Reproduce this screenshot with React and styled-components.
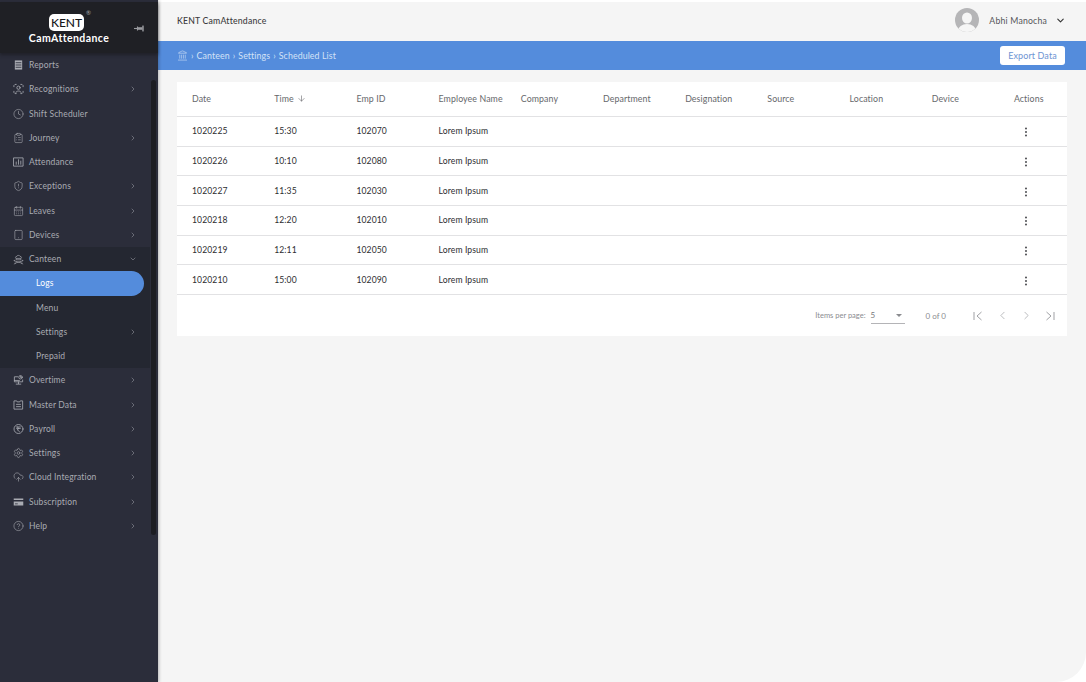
import React from "react";
import styled, { createGlobalStyle } from "styled-components";
import {
  Clock,
  ClipboardList,
  ShieldAlert,
  CalendarDays,
  Tablet,
  ChevronRight,
  ChevronDown,
  ChevronLeft,
  Settings,
  CloudUpload,
  CircleHelp,
  Landmark,
  ArrowDown,
  EllipsisVertical,
} from "lucide-react";

const GlobalStyle = createGlobalStyle`
  html, body { margin: 0; padding: 0; background: #fff; }
  body { font-family: "Lato", "Open Sans", sans-serif; }
  * { box-sizing: border-box; }
`;

const Page = styled.div`
  width: 1086px;
  height: 682px;
  display: flex;
  overflow: hidden;
`;
const Sidebar = styled.aside`
  width: 158px;
  flex: none;
  background: #2b2d3a;
  position: relative;
  box-shadow: 1px 0 3px rgba(0, 0, 0, 0.25);
`;
const Brand = styled.div`
  height: 51px;
  margin-top: 2px;
  background: #1f2025;
  box-shadow: 0 2px 3px rgba(20, 20, 24, 0.5);
  display: flex;
  flex-direction: column;
  align-items: center;
  padding-top: 12px;
  padding-right: 20px;
  position: relative;
`;
const LogoBadge = styled.div`
  width: 35px;
  height: 17px;
  margin-right: 5px;
  background: #fff;
  color: #17171a;
  font-size: 12px;
  font-weight: 500;
  line-height: 17px;
  text-align: center;
  border-radius: 5px;
  position: relative;
  &::after {
    content: "®";
    position: absolute;
    top: -5px;
    right: -7px;
    font-size: 6px;
    line-height: 8px;
    font-weight: 400;
    color: #aaa;
  }
`;
const LogoName = styled.div`
  color: #fff;
  font-size: 10.5px;
  font-weight: 700;
  line-height: 13px;
  margin-top: 1px;
  letter-spacing: 0.4px;
`;
const PinButton = styled.span`
  position: absolute;
  top: 21px;
  left: 134px;
  display: flex;
  color: #9a9ba0;
`;
const ScrollThumb = styled.div`
  position: absolute;
  top: 80px;
  left: 151px;
  width: 5px;
  height: 455px;
  border-radius: 3px;
  background: #1c1d22;
`;
const Menu = styled.nav`
  display: flex;
  flex-direction: column;
`;
const Group = styled.div`
  display: flex;
  flex-direction: column;
  background: #242731;
  margin-right: 8px;
`;
const Item = styled.div`
  height: 24.25px;
  display: flex;
  align-items: center;
  padding-left: ${(p) => (p.$sub ? "36px" : "13px")};
  padding-right: 13px;
  margin-right: ${(p) => (p.$sub || p.$flush ? "0" : "8px")};
  color: #a9abb2;
  font-size: 8.5px;
  letter-spacing: 0.15px;
  gap: 5px;
`;
const ActiveItem = styled(Item)`
  background: #548cdc;
  color: #fff;
  border-radius: 0 13px 13px 0;
  margin-right: 6px;
`;
const ItemIcon = styled.span`
  width: 11px;
  display: flex;
  justify-content: center;
  flex: none;
  color: #a9abb2;
`;
const ItemLabel = styled.span`
  flex: 1;
  white-space: nowrap;
`;
const Main = styled.main`
  flex: 1;
  min-width: 0;
  margin-top: 2px;
  height: 680px;
  background: #f5f5f5;
  border-bottom-right-radius: 30px;
  display: flex;
  flex-direction: column;
`;
const TopBar = styled.header`
  height: 39px;
  display: flex;
  align-items: center;
  padding: 0 20px 3px 19px;
  color: #3c3c40;
  font-size: 8.7px;
  letter-spacing: 0.2px;
`;
const AppTitle = styled.div`
  flex: 1;
  font-weight: 500;
`;
const Avatar = styled.svg`
  width: 24px;
  height: 24px;
  margin-right: 10px;
`;
const UserName = styled.span`
  margin-right: 8px;
  color: #55555a;
`;
const BlueBar = styled.div`
  height: 29px;
  background: #548cdc;
  display: flex;
  align-items: center;
  justify-content: space-between;
  padding: 0 21px 0 19px;
`;
const Crumbs = styled.div`
  display: flex;
  align-items: center;
  gap: 3px;
  color: #d3e2f7;
  font-size: 8.8px;
  letter-spacing: 0.1px;
`;
const ExportButton = styled.button`
  width: 65px;
  height: 19px;
  background: #fff;
  border: none;
  border-radius: 3px;
  color: #6d94d3;
  font: inherit;
  font-size: 9px;
  letter-spacing: 0.1px;
  padding: 0;
`;
const Card = styled.section`
  margin: 12px 19px 0 19px;
  background: #fff;
  display: flex;
  flex-direction: column;
`;
const Row = styled.div`
  display: grid;
  grid-template-columns: repeat(10, 82.2px) minmax(0, 1fr);
  height: ${(p) => (p.$head ? "35px" : "29.7px")};
  padding-left: 15px;
  padding-bottom: ${(p) => (p.$head ? "2px" : "0")};
  align-items: center;
  border-bottom: 1px solid #e2e2e4;
  font-size: ${(p) => (p.$head ? "8.8px" : "8.6px")};
  letter-spacing: 0.1px;
  color: ${(p) => (p.$head ? "#66676b" : "#2d2d30")};
`;
const HeadCell = styled.div`
  display: flex;
  align-items: center;
  gap: 3px;
  white-space: nowrap;
`;
const ActionCell = styled.div`
  display: flex;
  padding-left: 6px;
  padding-top: 2px;
  color: #55565a;
`;
const Pager = styled.div`
  height: 41px;
  display: flex;
  align-items: center;
  justify-content: flex-end;
  padding: 0 5px 0 0;
  color: #8a8b8f;
  font-size: 7.5px;
`;
const PageSize = styled.div`
  width: 34px;
  height: 16px;
  margin-left: 5px;
  display: flex;
  align-items: center;
  justify-content: space-between;
  padding-right: 3px;
  border-bottom: 1px solid #b4b4b7;
  font-size: 8px;
  color: #77787c;
`;
const Caret = styled.span`
  width: 0;
  height: 0;
  border-left: 3px solid transparent;
  border-right: 3px solid transparent;
  border-top: 3px solid #8a8b8f;
`;
const PageCount = styled.span`
  margin-left: 21px;
  margin-right: 20px;
  font-size: 8px;
`;
const PageButton = styled.span`
  width: 24px;
  display: flex;
  justify-content: center;
  color: #a0a1a5;
`;

const Glyph = ({ children, size = 12 }) => (
  <svg
    width={size}
    height={size}
    viewBox="0 0 12 12"
    fill="none"
    stroke="currentColor"
    strokeWidth="0.9"
    strokeLinecap="round"
    strokeLinejoin="round"
  >
    {children}
  </svg>
);

const PinIcon = () => (
  <svg width="11" height="11" viewBox="0 0 12 12" fill="currentColor">
    <rect x="0" y="5.4" width="3.5" height="1.2" />
    <rect x="3.2" y="3.8" width="1.2" height="4.4" />
    <rect x="4.2" y="4.6" width="5" height="2.8" />
    <rect x="9" y="2.8" width="1.6" height="6.4" />
  </svg>
);

const CanteenIcon = () => (
  <svg width="15" height="15" viewBox="0 0 16 16" fill="none" stroke="currentColor" strokeWidth="1">
    <path d="M4.5 6.5C3 5.5 3.6 3.3 5.4 3.5 5.8 1.6 9.8 1.5 10.4 3.5 12.3 3.2 13 5.5 11.5 6.5V8.4H4.5Z" />
    <path d="M4.5 6.4H11.5" />
    <path d="M1.5 9.8 14 13.6M14.5 9.8 2 13.6" />
    <path d="M1 9.5 3 9.2M13 9.2 15 9.5M2 15 4 13M12 13 14 15" />
  </svg>
);

const ReportsIcon = () => (
  <Glyph>
    <rect x="2" y="1" width="8" height="10" fill="currentColor" stroke="none" />
    <path d="M3.3 3.5H8.7M3.3 6H8.7M3.3 8.5H8.7" stroke="#2b2d3a" />
  </Glyph>
);
const RecognitionIcon = () => (
  <Glyph>
    <path d="M1 3.5V2.2L2.2 1H3.5M8.5 1H9.8L11 2.2V3.5M1 8.5V9.8L2.2 11H3.5M8.5 11H9.8L11 9.8V8.5" />
    <circle cx="6" cy="4.6" r="1.8" />
    <path d="M3.2 9.6C3.6 7.6 8.4 7.6 8.8 9.6" />
  </Glyph>
);
const AttendanceIcon = () => (
  <Glyph>
    <rect x="1" y="1.5" width="10" height="9" />
    <path d="M3.5 8.5V6M6 8.5V3.5M8.5 8.5V5" />
  </Glyph>
);
const OvertimeIcon = () => (
  <Glyph>
    <path d="M5 2.5H1.5V8H10.5V6" />
    <path d="M6 8V10M3.5 10.5H8.5M1.5 6.5H7" />
    <circle cx="8.2" cy="3" r="1.9" />
    <path d="M8.2 2.2V3.2H9" />
  </Glyph>
);
const MasterDataIcon = () => (
  <Glyph>
    <path d="M1.5 1.5H4L4.6 2.6H7.4L8 1.5H10.5V10.5H1.5Z" />
    <path d="M3.8 5.3H8.2M3.8 7.8H8.2" />
  </Glyph>
);
const PayrollIcon = () => (
  <Glyph>
    <circle cx="6" cy="6" r="4.9" />
    <path d="M4 3.8H8M4 5.4H8M4.6 3.8C6.6 3.8 6.6 6.8 4.6 6.8L7 8.8" />
  </Glyph>
);
const SubscriptionIcon = () => (
  <svg width="12" height="12" viewBox="0 0 12 12" fill="currentColor">
    <path d="M0.8 2.2H11.2V3.8H0.8ZM0.8 5.4H11.2V9.8H0.8ZM2.2 7.6V8.4H5.2V7.6Z" fillRule="evenodd" />
  </svg>
);

const lucideIcon = (Icon) => () => <Icon size={12} strokeWidth={1.3} />;

const items = [
  ["Reports", ReportsIcon, false],
  ["Recognitions", RecognitionIcon, true],
  ["Shift Scheduler", lucideIcon(Clock), false],
  ["Journey", lucideIcon(ClipboardList), true],
  ["Attendance", AttendanceIcon, false],
  ["Exceptions", lucideIcon(ShieldAlert), true],
  ["Leaves", lucideIcon(CalendarDays), true],
  ["Devices", lucideIcon(Tablet), true],
];
const lowerItems = [
  ["Overtime", OvertimeIcon],
  ["Master Data", MasterDataIcon],
  ["Payroll", PayrollIcon],
  ["Settings", lucideIcon(Settings)],
  ["Cloud Integration", lucideIcon(CloudUpload)],
  ["Subscription", SubscriptionIcon],
  ["Help", lucideIcon(CircleHelp)],
];
const rows = [
  ["1020225", "15:30", "102070"],
  ["1020226", "10:10", "102080"],
  ["1020227", "11:35", "102030"],
  ["1020218", "12:20", "102010"],
  ["1020219", "12:11", "102050"],
  ["1020210", "15:00", "102090"],
];
const columns = ["Company", "Department", "Designation", "Source", "Location", "Device"];

const MenuItem = ({ label, icon: Icon, arrow }) => (
  <Item>
    <ItemIcon>
      <Icon />
    </ItemIcon>
    <ItemLabel>{label}</ItemLabel>
    {arrow && <ChevronRight size={8} strokeWidth={1.5} />}
  </Item>
);

export default function App() {
  return (
    <Page>
      <GlobalStyle />
      <Sidebar>
        <Brand>
          <LogoBadge>KENT</LogoBadge>
          <LogoName>CamAttendance</LogoName>
          <PinButton>
            <PinIcon />
          </PinButton>
        </Brand>
        <Menu>
          {items.map(([label, icon, arrow]) => (
            <MenuItem key={label} label={label} icon={icon} arrow={arrow} />
          ))}
          <Group>
            <Item $flush>
              <ItemIcon>
                <CanteenIcon />
              </ItemIcon>
              <ItemLabel>Canteen</ItemLabel>
              <ChevronDown size={8} strokeWidth={1.5} />
            </Item>
            <ActiveItem $sub>
              <ItemLabel>Logs</ItemLabel>
            </ActiveItem>
            <Item $sub>
              <ItemLabel>Menu</ItemLabel>
            </Item>
            <Item $sub>
              <ItemLabel>Settings</ItemLabel>
              <ChevronRight size={8} strokeWidth={1.5} />
            </Item>
            <Item $sub>
              <ItemLabel>Prepaid</ItemLabel>
            </Item>
          </Group>
          {lowerItems.map(([label, icon]) => (
            <MenuItem key={label} label={label} icon={icon} arrow />
          ))}
        </Menu>
        <ScrollThumb />
      </Sidebar>
      <Main>
        <TopBar>
          <AppTitle>KENT CamAttendance</AppTitle>
          <Avatar viewBox="0 0 24 24">
            <defs>
              <clipPath id="avatarClip">
                <circle cx="12" cy="12" r="12" />
              </clipPath>
            </defs>
            <circle cx="12" cy="12" r="12" fill="#b5b5b7" />
            <g clipPath="url(#avatarClip)" fill="#f6f6f6">
              <ellipse cx="12" cy="10" rx="5" ry="5.6" />
              <ellipse cx="12" cy="23" rx="9" ry="7" />
            </g>
          </Avatar>
          <UserName>Abhi Manocha</UserName>
          <ChevronDown size={11} strokeWidth={2.4} color="#333" />
        </TopBar>
        <BlueBar>
          <Crumbs>
            <Landmark size={11} strokeWidth={1.3} />
            <span>›</span>
            <span>Canteen</span>
            <span>›</span>
            <span>Settings</span>
            <span>›</span>
            <span>Scheduled List</span>
          </Crumbs>
          <ExportButton>Export Data</ExportButton>
        </BlueBar>
        <Card>
          <Row $head>
            <HeadCell>Date</HeadCell>
            <HeadCell>
              Time <ArrowDown size={9} strokeWidth={1.6} />
            </HeadCell>
            <HeadCell>Emp ID</HeadCell>
            <HeadCell>Employee Name</HeadCell>
            {columns.map((c) => (
              <HeadCell key={c}>{c}</HeadCell>
            ))}
            <HeadCell>Actions</HeadCell>
          </Row>
          {rows.map(([date, time, id]) => (
            <Row key={date}>
              <span>{date}</span>
              <span>{time}</span>
              <span>{id}</span>
              <span>Lorem Ipsum</span>
              {columns.map((c) => (
                <span key={c} />
              ))}
              <ActionCell>
                <EllipsisVertical size={12} strokeWidth={2.2} />
              </ActionCell>
            </Row>
          ))}
          <Pager>
            <span>Items per page:</span>
            <PageSize>
              5
              <Caret />
            </PageSize>
            <PageCount>0 of 0</PageCount>
            <PageButton>
              <svg width="12" height="12" viewBox="0 0 12 12" fill="none" stroke="currentColor" strokeWidth="1">
                <path d="M2 2V10M9.5 2 5 6 9.5 10" />
              </svg>
            </PageButton>
            <PageButton>
              <ChevronLeft size={13} strokeWidth={1.3} />
            </PageButton>
            <PageButton>
              <ChevronRight size={13} strokeWidth={1.3} />
            </PageButton>
            <PageButton>
              <svg width="12" height="12" viewBox="0 0 12 12" fill="none" stroke="currentColor" strokeWidth="1">
                <path d="M10 2V10M2.5 2 7 6 2.5 10" />
              </svg>
            </PageButton>
          </Pager>
        </Card>
      </Main>
    </Page>
  );
}
